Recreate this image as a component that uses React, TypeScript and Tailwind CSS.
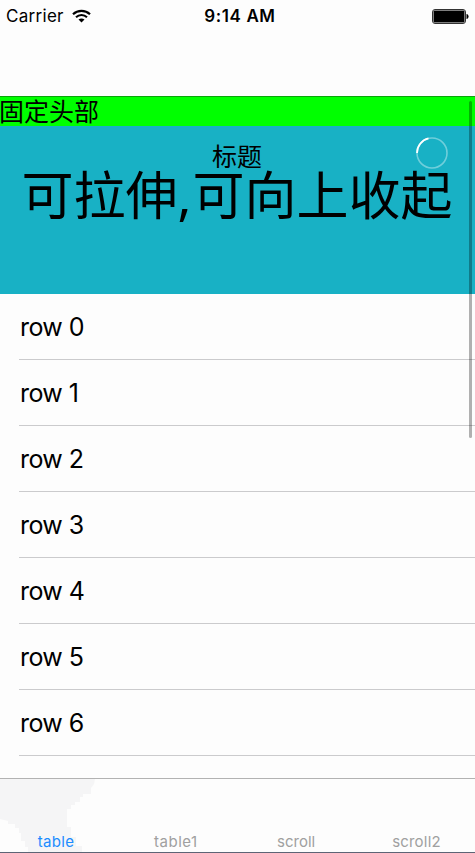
import React from "react";

const rows = [0, 1, 2, 3, 4, 5, 6];

function StatusBar() {
  return (
    <div className="grid h-8 shrink-0 grid-cols-3 items-center text-[17px] leading-8 text-black">
      <div className="flex items-center pl-[6px]">
        <span className="tracking-[0.3px]">Carrier</span>
        <svg className="ml-[8px]" width="19" height="14" viewBox="0 0 19 14" fill="none">
          <path d="M1 5.2C5.8.7 13.2.7 18 5.2" stroke="#000" strokeWidth="2.2" />
          <path d="M4 8.2c3.1-3 7.9-3 11 0" stroke="#000" strokeWidth="2.1" />
          <path d="M9.5 13.6 6.5 10.6c1.7-1.6 4.3-1.6 6 0z" fill="#000" />
        </svg>
      </div>
      <div className="pl-[5px] text-center font-semibold tracking-[0.6px] whitespace-nowrap">9:14 AM</div>
      <div className="flex justify-end pr-[6px]">
        <svg width="37" height="15" viewBox="0 0 37 15">
          <rect x="0.5" y="0.5" width="33" height="14" rx="2.5" fill="#fdfdfd" stroke="#333" />
          <rect x="1.5" y="1.5" width="31" height="12" rx="1" fill="#000" />
          <path d="M34.5 5c2.8.6 2.8 4.4 0 5z" fill="#000" />
        </svg>
      </div>
    </div>
  );
}

function Header() {
  return (
    <header className="shrink-0 font-['Noto_Sans_CJK_SC',sans-serif] text-black">
      <div className="h-[30px] border-t border-[#0aa50a] bg-[#00ff00] text-[25px] leading-[26px]">
        <span className="-ml-px">固定头部</span>
      </div>
      <div className="relative h-[168px] bg-[#18b1c5] pt-[14px] text-center">
        <div className="pr-px text-[25px] leading-[30px]">标题</div>
        <div className="pr-px text-[52px] leading-[46px] whitespace-nowrap">
          可拉伸<span className="pr-px font-['Noto_Sans',sans-serif]">,</span>可向上收起
        </div>
        <svg className="absolute top-[11px] right-[27px]" width="32" height="32" viewBox="0 0 32 32" fill="none">
          <circle cx="16" cy="16" r="15" stroke="#fff" strokeOpacity=".38" strokeWidth="1.6" />
          <path d="M1 16A15 15 0 0 1 12.5 1.4" stroke="#fff" strokeWidth="1.8" />
        </svg>
      </div>
    </header>
  );
}

function TabBar() {
  return (
    <nav className="relative h-[75px] shrink-0 border-t border-[#b2b2b2] bg-[#fdfdfd]">
      <svg className="absolute top-0 left-0" width="96" height="73" viewBox="0 0 96 73">
        <path
          d="M0 0H95L94 5L91 9V15H83V18H80V23H75V26H71V30H67V48H71V58H76V67H82V73H28V68H25V62H21V54H19V49H15V45H8V42L0 40Z"
          fill="#f5f5f6"
        />
      </svg>
      <div className="relative flex h-[74px] items-end justify-between border-b border-[#5d6475] pr-[34px] pl-[35px] text-[15px] leading-[20px] text-[#a0a0a0]">
        <span className="w-[42px] text-center tracking-[0.3px] text-[#1b8cff]">table</span>
        <span className="w-[50px] pl-[5px] text-center tracking-[0.5px] whitespace-nowrap">table1</span>
        <span className="w-[50px] pl-[3px] text-center whitespace-nowrap">scroll</span>
        <span className="w-[50px] pl-px text-center tracking-[0.2px] whitespace-nowrap">scroll2</span>
      </div>
    </nav>
  );
}

export default function App() {
  return (
    <div className="relative flex h-[853px] w-[475px] flex-col overflow-hidden bg-[#fdfdfd] font-['Inter',sans-serif]">
      <StatusBar />
      <div className="h-16 shrink-0" />
      <Header />
      <ul className="min-h-0 flex-1 overflow-hidden pl-[19px]">
        {rows.map((n) => (
          <li
            key={n}
            className="flex h-[66px] items-center border-b border-[#cbcbcd] pt-[2px] pl-px text-[25px] tracking-[-0.6px] text-black"
          >
            row {n}
          </li>
        ))}
      </ul>
      <TabBar />
      <div className="absolute top-[101px] right-[3px] h-[337px] w-[3px] rounded-full bg-black/30" />
    </div>
  );
}
